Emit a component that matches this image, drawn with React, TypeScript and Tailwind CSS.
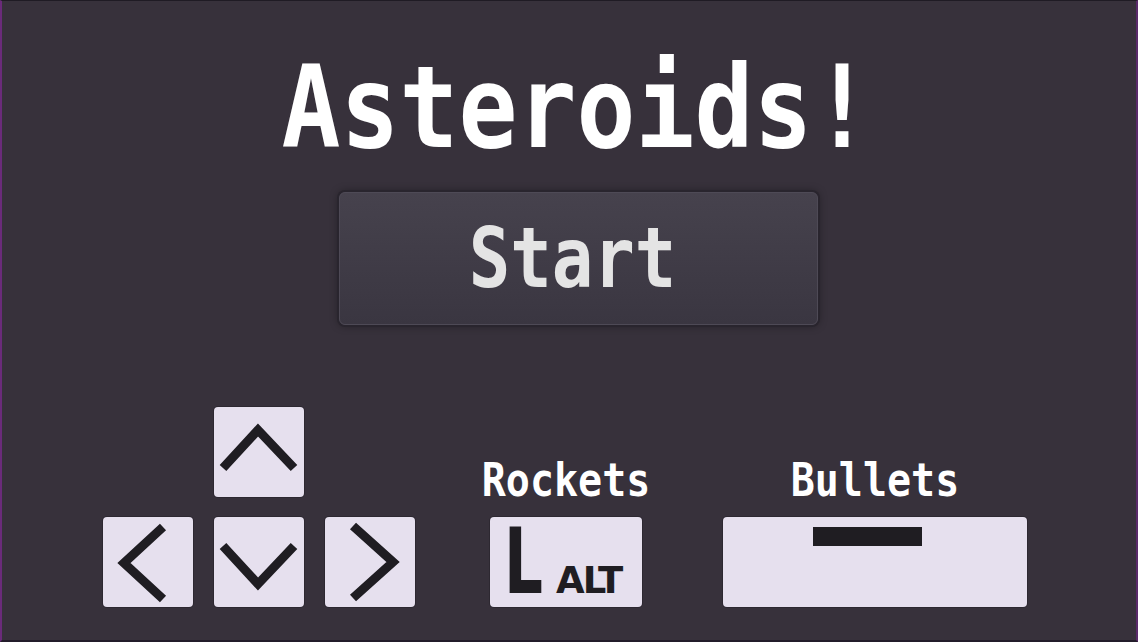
import React from "react";

const mono = "font-['DejaVu_Sans_Mono','Liberation_Mono',monospace]";

const ArrowKey = ({ points }: { points: string }) => (
    <div className="w-[90px] h-[90px] bg-[#e6e0ee] rounded-[4px] shadow-[0_0_0_1px_#2d2831]">
        <svg width="90" height="90" viewBox="0 0 90 90">
            <polyline points={points} fill="none" stroke="#1f1d22" strokeWidth="9" strokeLinecap="butt" strokeLinejoin="miter" />
        </svg>
    </div>
);

export default function App() {
    return (
        <div className="w-[1138px] h-[642px] bg-[#37313b] border-l-2 border-r-2 border-l-[#6a2b7a] border-r-[#5a2a6a] border-t border-t-[#1f1b24] border-b-2 border-b-[#231c2a] flex flex-col items-center overflow-hidden">
            {/* Title */}
            <h1 className={`mt-[57px] ml-[15px] h-[98px] leading-none text-[98px] font-bold text-white ${mono} scale-y-[1.17]`}>
                Asteroids!
            </h1>

            {/* Start button */}
            <button className="mt-[36px] ml-[19px] pr-[12px] w-[479px] h-[133px] flex items-center justify-center rounded-[6px] border border-[#4e4a56] bg-gradient-to-b from-[#46424d] to-[#3a3641] shadow-[0_0_0_2px_#29252e,0_0_10px_rgba(0,0,0,0.45)]">
                <span className={`leading-none text-[69px] font-bold text-[#e4e4e4] ${mono} scale-y-[1.21]`}>Start</span>
            </button>

            {/* Controls */}
            <div className="mt-[82px] w-full pl-[101px] flex items-end">
                <div className="grid grid-cols-[90px_90px_90px] gap-x-[21px] gap-y-[20px]">
                    <div />
                    <ArrowKey points="9,61 44,23 80,61" />
                    <div />
                    <ArrowKey points="60,10 21,46 60,82" />
                    <ArrowKey points="9,29 44,67 80,29" />
                    <ArrowKey points="28,9 68,45 28,81" />
                </div>

                <div className="ml-[75px] w-[152px] flex flex-col items-center">
                    <span className={`h-[40px] mb-[17px] leading-none whitespace-nowrap text-[40px] font-bold text-white ${mono} scale-y-[1.17]`}>Rockets</span>
                    <div className="w-[152px] h-[90px] bg-[#e6e0ee] rounded-[4px] shadow-[0_0_0_1px_#2d2831] pl-[14px] flex items-baseline text-[#1f1d22] font-['DejaVu_Sans',sans-serif] font-bold">
                        <span className="w-[52px] leading-none text-[90px] origin-left scale-x-[0.68]">L</span>
                        <span className="leading-none text-[37px] tracking-[-2px]">ALT</span>
                    </div>
                </div>

                <div className="ml-[81px] w-[304px] flex flex-col items-center">
                    <span className={`h-[40px] mb-[17px] leading-none whitespace-nowrap text-[40px] font-bold text-white ${mono} scale-y-[1.17]`}>Bullets</span>
                    <div className="w-[304px] h-[90px] bg-[#e6e0ee] rounded-[4px] shadow-[0_0_0_1px_#2d2831] pt-[10px] pl-[90px]">
                        <div className="w-[109px] h-[19px] bg-[#1f1d22]" />
                    </div>
                </div>
            </div>
        </div>
    );
}
